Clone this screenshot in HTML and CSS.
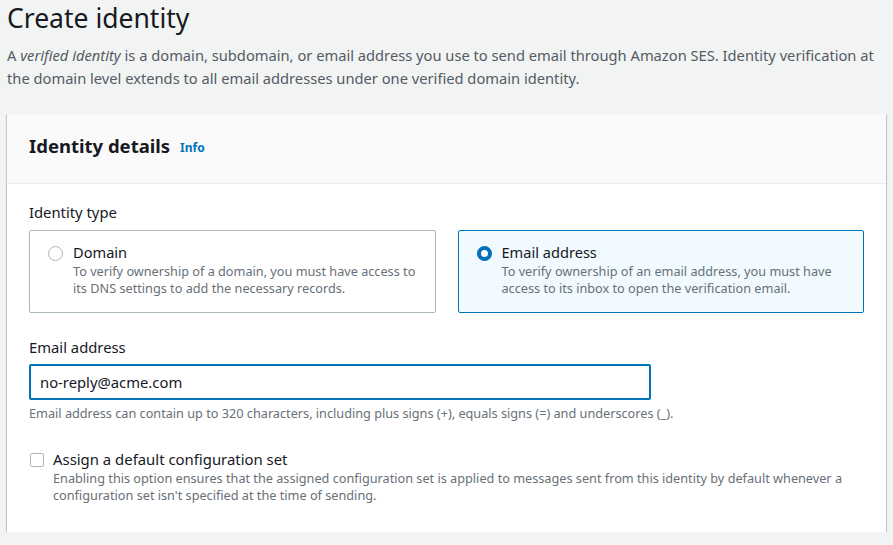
FILE: index.html
```html
<!DOCTYPE html>
<html lang="en">
<head>
<meta charset="utf-8">
<title>Create identity</title>
<link rel="stylesheet" href="styles.css">
</head>
<body>
<div class="page">
  <h1 class="title">Create identity</h1>
  <p class="intro">A <em>verified identity</em> is a domain, subdomain, or email address you use to send email through Amazon SES. Identity verification at the domain level extends to all email addresses under one verified domain identity.</p>

  <section class="card">
    <header class="card-header">
      <h2 class="card-title">Identity details</h2>
      <a class="info" href="#">Info</a>
    </header>
    <div class="card-body">
      <div class="field">
        <div class="label">Identity type</div>
        <div class="tiles">
          <label class="tile">
            <span class="radio"></span>
            <span class="tile-text">
              <span class="tile-label">Domain</span>
              <span class="tile-desc">To verify ownership of a domain, you must have access to its DNS settings to add the necessary records.</span>
            </span>
          </label>
          <label class="tile tile-selected">
            <span class="radio radio-checked"></span>
            <span class="tile-text">
              <span class="tile-label">Email address</span>
              <span class="tile-desc">To verify ownership of an email address, you must have access to its inbox to open the verification email.</span>
            </span>
          </label>
        </div>
      </div>

      <div class="field field-email">
        <div class="label">Email address</div>
        <div class="input">no-reply@acme.com</div>
        <div class="hint">Email address can contain up to 320 characters, including plus signs (+), equals signs (=) and underscores (_).</div>
      </div>

      <div class="check-row">
        <span class="checkbox"></span>
        <span class="check-text">
          <span class="check-label">Assign a default configuration set</span>
          <span class="check-desc">Enabling this option ensures that the assigned configuration set is applied to messages sent from this identity by default whenever a configuration set isn't specified at the time of sending.</span>
        </span>
      </div>
    </div>
  </section>
</div>
</body>
</html>
```

FILE: styles.css
```css
* { box-sizing: border-box; }

body {
  margin: 0;
  background: #f2f3f3;
  font-family: "Noto Sans", "Open Sans", sans-serif;
  color: #16191f;
}

.page {
  padding: 0 7px;
}

.title {
  margin: 0;
  font-size: 26.5px;
  line-height: 36px;
  font-weight: 400;
  color: #16191f;
}

.intro {
  margin: 8px 0 0;
  font-size: 14.7px;
  line-height: 23px;
  color: #545b64;
}

.card {
  margin-top: 24px;
  background: #fff;
  box-shadow: 0 1px 1px 0 rgba(0, 28, 36, 0.3), 1px 1px 1px 0 rgba(0, 28, 36, 0.15), -1px 1px 1px 0 rgba(0, 28, 36, 0.15);
}

.card-header {
  height: 70px;
  display: flex;
  align-items: center;
  gap: 10px;
  padding: 0 22px 5px;
  background: #fafafa;
  border-bottom: 1px solid #eaeded;
}

.card-title {
  margin: 0;
  font-size: 18.5px;
  line-height: 24px;
  font-weight: 700;
  color: #16191f;
}

.info {
  font-size: 12px;
  font-weight: 700;
  color: #0073bb;
  text-decoration: none;
  padding-top: 3px;
}

.card-body {
  padding: 17px 22px 28px;
}

.label {
  font-size: 14.8px;
  line-height: 22px;
  color: #16191f;
  margin-bottom: 7px;
}

.tiles {
  display: grid;
  grid-template-columns: 1fr 1fr;
  gap: 22px;
}

.tile {
  display: flex;
  gap: 10px;
  padding: 10px 18px 15px 18px;
  border: 1px solid #aab7b8;
  border-radius: 2px;
  background: #fff;
}

.tile-selected {
  border-color: #0073bb;
  background: #f1faff;
}

.radio {
  flex: none;
  width: 15px;
  height: 15px;
  margin-top: 5px;
  border: 1px solid #aab7b8;
  border-radius: 50%;
  background: #fff;
}

.radio-checked {
  border: 4px solid #0073bb;
}

.tile-text {
  display: flex;
  flex-direction: column;
}

.tile-label {
  font-size: 14.6px;
  line-height: 22px;
  color: #16191f;
}

.tile-desc {
  font-size: 12.7px;
  line-height: 17px;
  color: #687078;
}

.field-email {
  margin-top: 23px;
}

.field-email .label {
  margin-bottom: 6px;
}

.input {
  width: 622px;
  height: 36px;
  padding: 0 9px;
  display: flex;
  align-items: center;
  border: 2px solid #0073bb;
  border-radius: 2px;
  background: #fff;
  font-size: 14.8px;
  color: #16191f;
}

.hint {
  margin-top: 5px;
  font-size: 12.7px;
  line-height: 16px;
  color: #687078;
}

.check-row {
  display: flex;
  gap: 9px;
  margin-top: 27px;
}

.checkbox {
  flex: none;
  width: 14px;
  height: 14px;
  margin-top: 5px;
  margin-left: 1px;
  border: 1px solid #aab7b8;
  border-radius: 2px;
  background: #fff;
}

.check-text {
  display: flex;
  flex-direction: column;
}

.check-label {
  font-size: 14.9px;
  line-height: 22px;
  color: #16191f;
}

.check-desc {
  font-size: 12.7px;
  line-height: 17px;
  color: #687078;
}
```
